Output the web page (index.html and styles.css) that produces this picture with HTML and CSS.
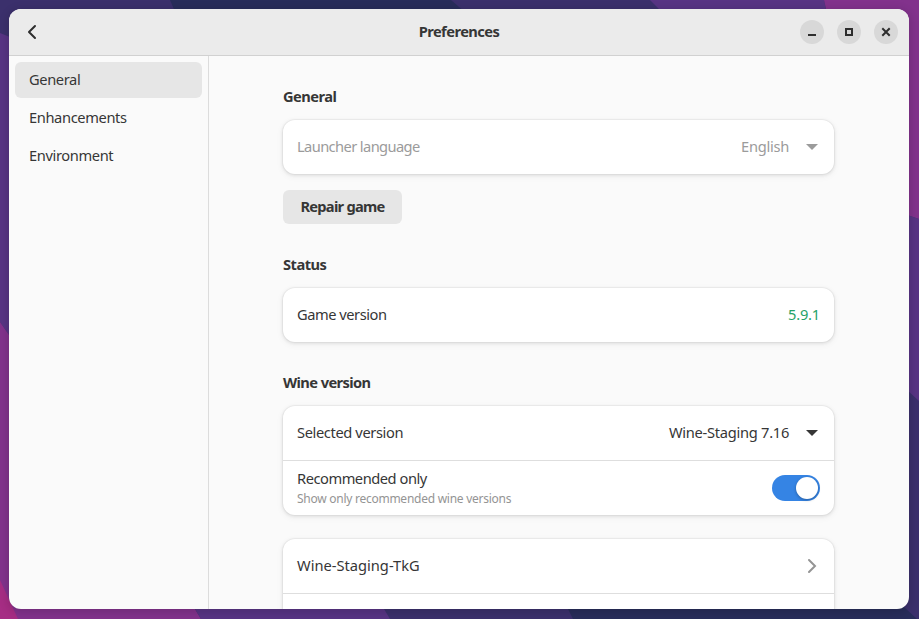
FILE: index.html
```html
<!DOCTYPE html>
<html lang="en">
<head>
<meta charset="utf-8">
<title>Preferences</title>
<link rel="stylesheet" href="styles.css">
</head>
<body>
<svg class="wallpaper" viewBox="0 0 919 619" aria-hidden="true">
  <rect width="919" height="619" fill="#3b306c"/>
  <path d="M170 0H451L520 60H196Z" fill="#282d5a"/>
  <path d="M650 0H824L836 60H710Z" fill="#583484"/>
  <path d="M824 0H919V219L880 206L826 9Z" fill="#82328c"/>
  <path d="M919 219V401L880 365V206Z" fill="#583484"/>
  <path d="M0 33L30 45V365L0 322Z" fill="#583484"/>
  <path d="M0 322L30 365L195 609L201 619H0Z" fill="#82328c"/>
  <path d="M0 580L18 619H0Z" fill="#a62d84"/>
  <path d="M180 584H369L390 619H201Z" fill="#583484"/>
  <path d="M556 585H880L917 619H573Z" fill="#282d5a"/>
</svg>
<div class="window">
  <header class="headerbar">
    <svg class="back" viewBox="0 0 16 16"><path d="M11 2L5 8L11 14" fill="none" stroke="#2e2e2e" stroke-width="2" stroke-linecap="round" stroke-linejoin="round"/></svg>
    <h1 class="title">Preferences</h1>
    <div class="controls">
      <span class="control"><svg viewBox="0 0 24 24"><path d="M8 14h8v2H8z" fill="#2e2e2e"/></svg></span>
      <span class="control"><svg viewBox="0 0 24 24"><path d="M9 9h6v6H9z" fill="none" stroke="#2e2e2e" stroke-width="2"/></svg></span>
      <span class="control"><svg viewBox="0 0 24 24"><path d="M9 9L15 15M15 9L9 15" stroke="#2e2e2e" stroke-width="2" stroke-linecap="square"/></svg></span>
    </div>
  </header>
  <div class="body">
    <nav class="sidebar">
      <a class="nav-item active">General</a>
      <a class="nav-item">Enhancements</a>
      <a class="nav-item">Environment</a>
    </nav>
    <main class="content">
      <section class="group">
        <h2>General</h2>
        <div class="card">
          <div class="row disabled"><span class="text tighter">Launcher language</span><span class="text value loose">English</span><svg class="arrow" viewBox="0 0 16 16"><path d="M2 5H14L8 11Z" fill="currentColor"/></svg></div>
        </div>
        <button class="button">Repair game</button>
      </section>
      <section class="group">
        <h2>Status</h2>
        <div class="card">
          <div class="row"><span class="text tight">Game version</span><span class="text value success">5.9.1</span></div>
        </div>
      </section>
      <section class="group">
        <h2 class="tighter">Wine version</h2>
        <div class="card">
          <div class="row"><span class="text">Selected version</span><span class="text value loose">Wine-Staging 7.16</span><svg class="arrow" viewBox="0 0 16 16"><path d="M2 5H14L8 11Z" fill="currentColor"/></svg></div>
          <div class="row"><div class="labels"><span class="tight">Recommended only</span><span class="subtitle">Show only recommended wine versions</span></div><span class="switch"><span class="knob"></span></span></div>
        </div>
      </section>
      <section class="group">
        <div class="card">
          <div class="row"><span class="text normal">Wine-Staging-TkG</span><svg class="chevron" viewBox="0 0 16 16"><path d="M5 2L11 8L5 14" fill="none" stroke="#949494" stroke-width="2" stroke-linecap="round"/></svg></div>
          <div class="row"></div>
        </div>
      </section>
    </main>
  </div>
</div>
</body>
</html>
```
FILE: styles.css
```css
* { box-sizing: border-box; }
body {
  margin: 0;
  height: 619px;
  overflow: hidden;
  padding: 9px 10px 10px 9px;
  font: 14.67px/20px "Noto Sans", sans-serif;
  letter-spacing: -.38px;
  color: #363636;
}
.wallpaper { position: absolute; inset: 0; width: 919px; height: 619px; }
.window {
  position: relative;
  height: 600px;
  display: flex;
  flex-direction: column;
  overflow: hidden;
  border-radius: 12px;
  background: #fafafa;
  box-shadow: 0 2px 8px 2px rgba(0,0,0,.13);
}
.headerbar {
  display: grid;
  grid-template-columns: 1fr auto 1fr;
  align-items: center;
  flex: none;
  height: 47px;
  padding: 0 11px;
  background: #ebebeb;
  border-bottom: 1px solid #d1d1d1;
}
.back { width: 16px; height: 16px; margin-left: 4px; }
.title { margin: 0; padding-bottom: 2px; font-size: 14.67px; font-weight: 700; letter-spacing: -.55px; }
.controls { display: flex; gap: 13px; justify-content: flex-end; }
.control { width: 24px; height: 24px; border-radius: 50%; background: #d8d8d8; }
.control svg { display: block; }
.body { display: flex; flex: 1; min-height: 0; }
.sidebar {
  display: flex;
  flex-direction: column;
  gap: 2px;
  flex: none;
  width: 200px;
  padding: 6px;
  border-right: 1px solid #dcdcdc;
}
.nav-item { height: 36px; padding: 7px 14px 9px; border-radius: 6px; }
.nav-item.active { background: #e6e6e6; }
.content { flex: 1; padding: 30px 75px 0 74px; overflow: hidden; }
.group { margin-bottom: 24px; }
.group:nth-child(-n+2) { margin-bottom: 30px; }
h2 { margin: 0 0 14px; font-size: 14.67px; line-height: 20px; font-weight: 700; letter-spacing: -.52px; }
.card {
  border-radius: 12px;
  background: #fff;
  box-shadow: 0 0 0 1px rgba(0,0,0,.03), 0 1px 3px 1px rgba(0,0,0,.07), 0 2px 6px 2px rgba(0,0,0,.03);
}
.row { display: flex; align-items: center; height: 54px; padding: 0 14px; }
.row + .row { height: 55px; border-top: 1px solid #dedede; }
.text { padding-bottom: 2px; }
.loose { letter-spacing: -.28px; }
.normal { letter-spacing: 0; }
.tight { letter-spacing: -.47px; }
.tighter { letter-spacing: -.6px; }
.disabled { color: #9b9b9b; }
.value { margin-left: auto; }
.success { color: #26a269; letter-spacing: -.2px; }
.arrow { width: 16px; height: 16px; margin-left: 15px; }
.chevron { width: 16px; height: 16px; margin-left: auto; }
.labels { display: flex; flex-direction: column; }
.subtitle { margin-top: 2px; font-size: 12px; line-height: 18px; letter-spacing: -.26px; color: #949494; }
.switch { width: 48px; height: 26px; margin-left: auto; padding: 2px; border-radius: 13px; background: #3584e4; }
.knob { display: block; width: 22px; height: 22px; margin-left: auto; border-radius: 50%; background: #fff; box-shadow: 0 1px 3px rgba(0,0,0,.3); }
.button {
  display: block;
  width: 119px;
  height: 34px;
  margin-top: 16px;
  padding: 0 0 2px;
  border: 0;
  border-radius: 6px;
  background: #e6e6e6;
  color: inherit;
  font: inherit;
  font-weight: 700;
  letter-spacing: -.73px;
}
```
